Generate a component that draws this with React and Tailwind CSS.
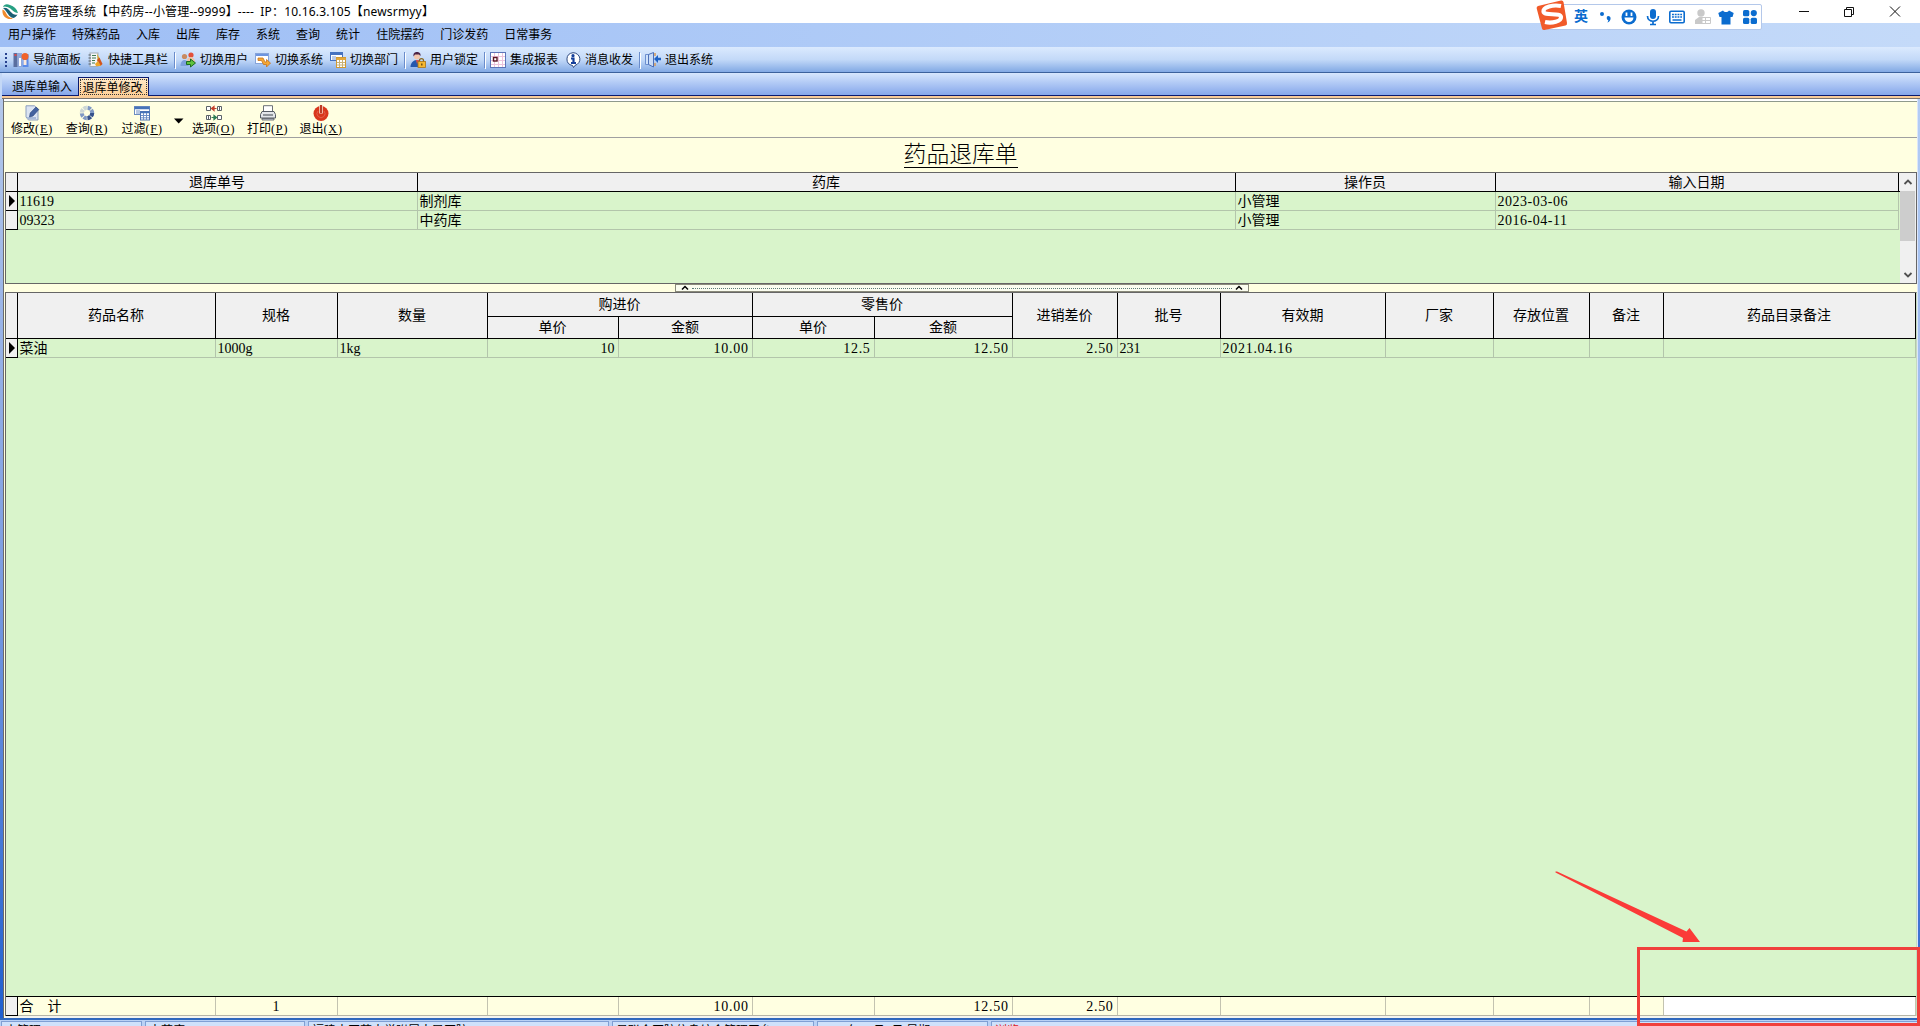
import { clsx } from "clsx";

const MENUS = ["用户操作", "特殊药品", "入库", "出库", "库存", "系统", "查询", "统计", "住院摆药", "门诊发药", "日常事务"];

const TOOLS = [
  [{ label: "导航面板", icon: PanelIcon }, { label: "快捷工具栏", icon: ShortcutIcon, wide: true }],
  [{ label: "切换用户", icon: UsersIcon }, { label: "切换系统", icon: SwitchIcon }, { label: "切换部门", icon: TablesIcon }],
  [{ label: "用户锁定", icon: LockIcon }],
  [{ label: "集成报表", icon: ReportIcon }, { label: "消息收发", icon: InfoIcon }],
  [{ label: "退出系统", icon: DoorIcon }],
];

const ORDERS = [
  { no: "11619", store: "制剂库", user: "小管理", date: "2023-03-06", current: true },
  { no: "09323", store: "中药库", user: "小管理", date: "2016-04-11" },
];

// column widths of the detail grid, the 1px separator included
const W = {
  name: "w-[198px]", spec: "w-[122px]", qty: "w-[150px]",
  buyPrice: "w-[131px]", buySum: "w-[134px]", sellPrice: "w-[122px]", sellSum: "w-[138px]",
  diff: "w-[105px]", batch: "w-[103px]", expiry: "w-[165px]", maker: "w-[108px]",
  place: "w-[96px]", note: "w-[74px]", catalog: "w-[252px]",
};

const DETAIL = [
  { w: W.name, text: "菜油" },
  { w: W.spec, text: "1000g" },
  { w: W.qty, text: "1kg" },
  { w: W.buyPrice, text: "10", right: true },
  { w: W.buySum, text: "10.00", right: true },
  { w: W.sellPrice, text: "12.5", right: true },
  { w: W.sellSum, text: "12.50", right: true },
  { w: W.diff, text: "2.50", right: true },
  { w: W.batch, text: "231" },
  { w: W.expiry, text: "2021.04.16" },
  { w: W.maker }, { w: W.place }, { w: W.note }, { w: W.catalog },
];

const TOTALS = [
  { w: W.name, text: "合　计" },
  { w: W.spec, text: "1", center: true },
  { w: W.qty },
  { w: W.buyPrice },
  { w: W.buySum, text: "10.00", right: true },
  { w: W.sellPrice },
  { w: W.sellSum, text: "12.50", right: true },
  { w: W.diff, text: "2.50", right: true },
  { w: W.batch }, { w: W.expiry }, { w: W.maker }, { w: W.place }, { w: W.note },
  { w: W.catalog, white: true },
];

const STATUS = [
  { w: "w-[141px]", text: "小管理" },
  { w: "w-[160px]", text: "中药库" },
  { w: "w-[301px]", text: "福建中医药大学附属人民医院" },
  { w: "w-[202px]", text: "易联众医院信息综合管理平台" },
  { w: "w-[171px]", text: "2023年03月7日 星期二" },
  { w: "flex-1", text: "浏览", red: true },
];

function Svg({ children, size = "size-4" }) {
  return <svg viewBox="0 0 16 16" className={clsx("shrink-0", size)}>{children}</svg>;
}

function PanelIcon() {
  return (
    <Svg>
      <rect x="0.5" y="1" width="4" height="14" fill="#5a6fa0" />
      <rect x="1.5" y="2" width="2" height="2" fill="#e04848" />
      <rect x="5" y="1" width="4" height="14" fill="#8fa6d8" />
      <rect x="6" y="6" width="2" height="8" fill="#fff" />
      <rect x="9.5" y="2" width="6" height="13" fill="#5b8be8" />
      <circle cx="12" cy="4.5" r="3.5" fill="#f0622a" />
      <rect x="10.5" y="8" width="3" height="5" fill="#fbe9dc" />
    </Svg>
  );
}
function ShortcutIcon() {
  return (
    <Svg>
      <rect x="2" y="1" width="8" height="13.5" fill="#f4f6f8" stroke="#a3adb5" />
      <path d="M4 3.5h4M4 6h4M4 8.500h3M4 11h3" stroke="#3f7a50" />
      <path d="M0.500 3h2.500M0.500 6h2.500M0.500 9h2.500M0.500 12h2.500" stroke="#56606a" />
      <path d="M9 1.500l2.500 5-1.500 3.500z" fill="#d9a520" />
      <path d="M9 8l2.500-2.500L14.500 12l-2 2z" fill="#d2541c" />
      <path d="M7 12l3-3 3 5H8z" fill="#eda52a" />
    </Svg>
  );
}
function UsersIcon() {
  return (
    <Svg>
      <circle cx="4.500" cy="4.500" r="2.600" fill="#c98a60" />
      <circle cx="11" cy="3" r="2.600" fill="#e2503a" />
      <path d="M0.500 14c0-4 2-6 4-6s4 2 4 6z" fill="#7ea0dd" />
      <path d="M7 9c0-3 2-4 4-4s4 2 4 5z" fill="#f2c3a4" />
      <path d="M6.500 9.500h4V7l5 4-5 4v-2.500h-4z" fill="#5fc33c" stroke="#1d6b21" />
    </Svg>
  );
}
function SwitchIcon() {
  return (
    <Svg>
      <rect x="0.500" y="1.500" width="13" height="10" fill="#fff" stroke="#86a4da" />
      <rect x="1" y="2" width="12" height="2" fill="#6d95e0" />
      <path d="M3 6h5l2 4h1.500V7.500L15.500 11l-4 4v-2.500H8.500L6.500 8.500H3z" fill="#f5a835" stroke="#c8741b" strokeWidth="0.800" />
    </Svg>
  );
}
function TablesIcon() {
  return (
    <Svg>
      <rect x="0.500" y="0.500" width="12" height="8" fill="#fff" stroke="#4673c0" />
      <path d="M0.500 2h12" stroke="#4673c0" strokeWidth="2" />
      <path d="M2 5h4M2 7h4" stroke="#7a9ad0" />
      <rect x="6.500" y="5.500" width="9" height="10" fill="#fff" stroke="#d19a33" />
      <path d="M6.500 7h9" stroke="#e5a93c" strokeWidth="2" />
      <path d="M9.500 8v7M12.500 8v7M7 10.500h8M7 13h8" stroke="#c9b277" />
    </Svg>
  );
}
function LockIcon() {
  return (
    <Svg>
      <circle cx="7" cy="4.500" r="3" fill="#f3c7ad" />
      <path d="M3.500 4.500C3 1 5 0 7 0s4 1 3.500 4L9 2.500H5z" fill="#4b2345" />
      <path d="M0.500 15c0-4 3-7 6-7s5 2 6 7z" fill="#2558ae" />
      <path d="M6 8l1 4 2-4z" fill="#e05050" />
      <path d="M9.500 10V8.500c0-2.600 4-2.600 4 0V10" fill="none" stroke="#8a6a20" strokeWidth="1.300" />
      <rect x="8" y="9.500" width="7.500" height="6" fill="#f6b832" stroke="#a8741a" strokeWidth="0.800" />
      <path d="M11.800 11.500v2" stroke="#5f4210" strokeWidth="1.300" />
    </Svg>
  );
}
function ReportIcon() {
  return (
    <Svg>
      <rect x="0.500" y="0.500" width="15" height="15" fill="#fff" stroke="#5b74b8" />
      <path d="M4.500 1v14M8.500 1v14M12.500 1v14M1 4.500h14M1 8.500h14M1 12.500h14" stroke="#ecc4dc" />
      <rect x="3.500" y="5.500" width="3.500" height="3.500" fill="#fff" stroke="#5c1624" strokeWidth="1.400" />
    </Svg>
  );
}
function InfoIcon() {
  return (
    <Svg>
      <path d="M8 0.700a7 6.500 0 0 1 2 12.700L8.500 15.500 7.500 13.500A7 6.500 0 0 1 8 0.700z" fill="#fff" stroke="#2f4a80" />
      <circle cx="8" cy="3.700" r="1.600" fill="#16409a" />
      <path d="M6 6.500h2.500V11M6 11h5" fill="none" stroke="#16409a" strokeWidth="2.200" />
    </Svg>
  );
}
function DoorIcon() {
  return (
    <Svg>
      <path d="M0.500 2.500h8v10h-8z" fill="#cfe2fb" stroke="#6c8fd0" />
      <path d="M3.500 2.500L8.500 0.500v14.500l-5-2.500z" fill="#c9dcf8" stroke="#4d70b8" />
      <path d="M10 1v3M10 11v3" stroke="#d89a58" strokeWidth="1.500" />
      <path d="M9 7l4-4v2.700h3v2.600h-3V11z" fill="#1f62c4" />
    </Svg>
  );
}

function EditIcon() {
  return (
    <Svg>
      <path d="M2 0.800h8.500l3.500 3.200v11H4.500L2 12z" fill="#dbe4f2" stroke="#8c9fbe" />
      <path d="M3 13h9" stroke="#a8bad8" strokeWidth="2" />
      <path d="M5.500 12l0.700-4L12 2l2.800 2.500-5.800 6.500z" fill="#44639f" stroke="#27417a" strokeWidth="0.600" />
    </Svg>
  );
}
function QueryIcon() {
  return (
    <Svg>
      <circle cx="8" cy="8" r="5.200" fill="none" stroke="#7f98c4" strokeWidth="4" strokeDasharray="3.300 0.780" />
      <path d="M8 2.800A5.200 5.200 0 0 0 2.800 8" fill="none" stroke="#ffffe1" strokeWidth="4.200" opacity="0.600" />
      <path d="M13.200 8A5.200 5.200 0 0 1 8 13.200" fill="none" stroke="#35518b" strokeWidth="4" strokeDasharray="3.300 0.780" />
    </Svg>
  );
}
function FilterIcon() {
  return (
    <Svg>
      <rect x="0.500" y="1.500" width="15" height="8" fill="#fff" stroke="#6c8cc0" />
      <path d="M0.500 3h15" stroke="#4673b8" strokeWidth="2.500" />
      <path d="M2 6h4M2 8h4" stroke="#6f8fc6" />
      <rect x="6.500" y="6.500" width="9" height="8.500" fill="#fff" stroke="#4f74b4" />
      <path d="M6.500 7.500h9" stroke="#4673b8" strokeWidth="1.500" />
      <path d="M9.500 8v7M12.500 8v7M7 10.500h8M7 12.800h8" stroke="#6f8fc6" />
    </Svg>
  );
}
function OptionsIcon() {
  return (
    <Svg>
      <path d="M0.500 1.500h4v4h-4zM11.500 1.500h4v4h-4zM0.500 10.500h4v4h-4zM11.500 10.500h4v4h-4z" fill="#fff" stroke="#5b6268" />
      <path d="M13.500 1.500v4M2.500 10.500v4" stroke="#5b6268" />
      <path d="M5.500 3.500l2.500-2v4zM7 3.500h3.500" fill="#c3402c" stroke="#c3402c" strokeWidth="1.200" />
      <path d="M10.500 12.500l-2.500-2v4zM5.500 12.500h3" fill="#2d7f58" stroke="#2d7f58" strokeWidth="1.200" />
    </Svg>
  );
}
function PrintIcon() {
  return (
    <Svg>
      <path d="M3.500 7V0.700h9V7" fill="#fff" stroke="#6b7078" />
      <path d="M2 6.500h12l1.500 3v3.500h-15V9.500z" fill="#e3e6ea" stroke="#555b64" />
      <path d="M3 10h10" stroke="#3f444c" />
      <path d="M2 13.500h12v1.500H2z" fill="#c9ced6" stroke="#555b64" strokeWidth="0.800" />
    </Svg>
  );
}
function PowerIcon() {
  return (
    <Svg>
      <circle cx="8" cy="8.500" r="7.500" fill="#d9371c" />
      <path d="M5 6a4 4 0 1 0 6 0" fill="none" stroke="#e2604a" strokeWidth="1" />
      <path d="M8 0v8.500" stroke="#f6d9c8" strokeWidth="3.600" />
      <path d="M8 0v8" stroke="#b52a12" strokeWidth="1.800" />
    </Svg>
  );
}

function ImeBar() {
  return (
    <div className="absolute left-[1536px] top-0 z-20 flex h-[30px] w-[226px] items-start">
      <div className="mt-1 ml-[10px] flex h-[26px] w-[216px] items-center rounded-[2px] border border-[#b4c8ea] bg-white pl-[27px] text-[#0b6ccf]">
        <span className="w-[24px] text-[14px] leading-[22px] font-bold">英</span>
        <svg viewBox="0 0 16 16" className="ml-[-1px] size-4 shrink-0" fill="currentColor">
          <circle cx="5" cy="5" r="2" />
          <path d="M10 7.500a2.200 2.200 0 0 1 3.600 1.500c0 2.500-1.300 4-3.300 4.600 0.800-1 1-1.600 1-2.300-1.500-0.400-1.900-2.400-1.300-3.800z" />
        </svg>
        <svg viewBox="0 0 16 16" className="ml-[8px] size-4 shrink-0">
          <circle cx="8" cy="8" r="7.500" fill="currentColor" />
          <path d="M5.500 3.500v3.500M10.500 3.500v3.500" stroke="#fff" strokeWidth="1.800" />
          <path d="M3.500 8.500h9a4.500 4.500 0 0 1-9 0z" fill="#fff" />
        </svg>
        <svg viewBox="0 0 16 18" className="ml-[8px] h-[18px] w-4 shrink-0">
          <rect x="5" y="1" width="6" height="10" rx="3" fill="currentColor" />
          <path d="M2.500 8c0 7 11 7 11 0M8 13v3M5 16.500h6" fill="none" stroke="currentColor" strokeWidth="1.700" />
        </svg>
        <svg viewBox="0 0 16 14" className="ml-[8px] h-[14px] w-4 shrink-0">
          <rect x="0.800" y="1.200" width="14.400" height="11.600" rx="1.200" fill="#fff" stroke="currentColor" strokeWidth="1.600" />
          <path d="M3 4.500h10M3 7h10" stroke="currentColor" strokeWidth="1.700" strokeDasharray="1.900 0.850" />
          <path d="M3.500 10h9" stroke="currentColor" strokeWidth="1.500" />
        </svg>
        <svg viewBox="0 0 16 16" className="ml-[10px] size-4 shrink-0">
          <circle cx="6" cy="4" r="3.700" fill="#c9c9c9" />
          <path d="M0 15V11l4-3h4v7z" fill="#c9c9c9" />
          <path d="M7 8.500h8.500v6H7zM7 11.500h8.500M10.500 8.500v6" fill="#fff" stroke="#c9c9c9" />
        </svg>
        <svg viewBox="0 0 16 15" className="ml-[7px] h-[15px] w-4 shrink-0">
          <path d="M5 0.500c1.500 2 4.500 2 6 0l4.700 2.500L14.500 7l-2 0v7.500h-9V7h-2L0.300 3z" fill="currentColor" />
        </svg>
        <svg viewBox="0 0 14 14" className="ml-[9px] size-[14px] shrink-0" fill="currentColor">
          <rect width="6.300" height="6.300" rx="1.600" />
          <circle cx="10.800" cy="3.100" r="3.100" />
          <rect y="7.700" width="6.300" height="6.300" rx="1.600" />
          <rect x="7.700" y="7.700" width="6.300" height="6.300" rx="1.600" />
        </svg>
      </div>
      <svg viewBox="0 0 32 31" className="absolute top-0 left-0 h-[31px] w-8">
        <path d="M2 6L25 0.500q2-0.500 2.500 1.500L31 23q0.300 2-1.500 2.500L8.500 30q-2 0.300-2.500-1.500L0.700 8.500Q0.300 6.500 2 6z" fill="#f15a29" />
        <path d="M25 6C17 4.500 7 7 7.500 11.500c0.500 5 17 0.500 17.500 5.500 0.300 4.500-9 6.500-16 5" fill="none" stroke="#fff" strokeWidth="4.200" />
      </svg>
    </div>
  );
}

function TitleBar() {
  return (
    <div className="flex h-[23px] items-center bg-white pl-[2px]">
      <svg viewBox="0 0 17 17" className="size-[17px] shrink-0">
        <path d="M1 4C2 1 5 0.500 8 2c4 1.500 7 4 8 8-2 0-4-1-6-3S5 3 1 4z" fill="#27a083" />
        <path d="M1 5c3-1 5.500 1 7.500 3.500s4.500 4 7 3c-1 2-2.500 3-4 3.500-3-0.500-4-2-5.500-4S3.500 7 1 5z" fill="#1a5f74" />
        <path d="M0.500 6.500c2 0.500 3 2.500 4 4.500s3 4 6.500 4.500C6 17.500-0.500 14 0.500 6.500z" fill="#f08b2d" />
        <path d="M1 4.500c4-1 5.500 1 7.300 3.200s4 3.500 7.200 2.800" fill="none" stroke="#fff" strokeWidth="0.700" />
      </svg>
      <span className="ml-1 text-[12px] tracking-[0.180px] whitespace-pre text-black [word-spacing:3px]">药房管理系统【中药房--小管理--9999】---- IP：10.16.3.105【newsrmyy】</span>
      <svg viewBox="0 0 110 16" className="mr-[15px] ml-auto h-4 w-[110px]" fill="none" stroke="#111" strokeWidth="1">
        <path d="M4 7.500h10" />
        <path d="M49.500 5.500h7v7h-7zM51.500 5.500v-2h7v7h-2" />
        <path d="M95 2.500l10 10M105 2.500l-10 10" />
      </svg>
    </div>
  );
}

function Cell({ w, text, right, center, white, line = "border-[#b3c5ab]" }) {
  return (
    <div className={clsx("flex h-full shrink-0 items-center border-r px-[2px] pt-[2px] text-[14px]", w, line,
      right && "justify-end pr-[3px]", center && "justify-center", white && "bg-white")}>
      {text && (
        <span className={clsx("leading-[16px] whitespace-pre", /\./.test(text) && "tracking-[0.700px]", /-/.test(text) && "tracking-[0.500px]")}>{text}</span>
      )}
    </div>
  );
}

function Head({ w, children, className }) {
  return (
    <div className={clsx("flex shrink-0 items-center justify-center border-r border-black text-[14px] leading-[18px]", w, className)}>{children}</div>
  );
}

function HeadGroup({ title, left, right }) {
  return (
    <div className="flex flex-col">
      <div className="flex h-[24px] items-center justify-center border-r border-b border-black text-[14px] leading-[18px]">{title}</div>
      <div className="flex flex-1">
        <Head w={left}>单价</Head>
        <Head w={right}>金额</Head>
      </div>
    </div>
  );
}

function Indicator({ current }) {
  return (
    <div className="flex h-full w-[12px] shrink-0 items-center border-r border-black bg-[#f0f0f0] pl-[3px]">
      {current && (
        <svg viewBox="0 0 6 12" className="h-3 w-[6px]"><path d="M0 0l6 6-6 6z" fill="#000" /></svg>
      )}
    </div>
  );
}

function ToolButton({ icon: Icon, label, hotkey, w }) {
  return (
    <div className={clsx("flex flex-col items-center pt-[3px]", w)}>
      <Icon />
      <div className="flex text-[12px] leading-4 whitespace-nowrap">
        {label}
        <span className="font-['Liberation_Serif',serif] tracking-[0.900px]">(<u className="underline-offset-1">{hotkey}</u>)</span>
      </div>
    </div>
  );
}

function OrdersGrid() {
  return (
    <div className="flex h-[112px] border border-[#666] bg-[#d9f4cb]">
      <div className="flex-1">
        <div className="flex h-[19px] border-b border-black bg-[#f0f0f0]">
          <Head w="w-[12px]" />
          <Head w="w-[400px]" className="pt-px">退库单号</Head>
          <Head w="w-[818px]" className="pt-px">药库</Head>
          <Head w="w-[260px]" className="pt-px">操作员</Head>
          <Head w="w-[403px]" className="pt-px">输入日期</Head>
        </div>
        {ORDERS.map((o) => (
          <div key={o.no} className="flex h-[19px]">
            <div className="border-b border-black"><Indicator current={o.current} /></div>
            <div className="flex border-b border-[#b3c5ab]">
              <Cell w="w-[400px]" text={o.no} />
              <Cell w="w-[818px]" text={o.store} />
              <Cell w="w-[260px]" text={o.user} />
              <Cell w="w-[403px]" text={o.date} />
            </div>
          </div>
        ))}
      </div>
      <div className="flex w-[16px] flex-col items-center bg-[#f0f0f0]">
        <svg viewBox="0 0 16 18" className="h-[18px] w-4"><path d="M4.500 11L8 7.500l3.500 3.500" fill="none" stroke="#505050" strokeWidth="1.800" /></svg>
        <div className="h-[50px] w-[15px] bg-[#cdcdcd]" />
        <svg viewBox="0 0 16 18" className="mt-auto h-[18px] w-4"><path d="M4.500 8L8 11.500 11.500 8" fill="none" stroke="#505050" strokeWidth="1.800" /></svg>
      </div>
    </div>
  );
}

function DetailGrid() {
  return (
    <div className="flex flex-1 flex-col border border-b-0 border-[#666] border-r-[#c5dcc0] bg-[#d9f4cb]">
      <div className="flex h-[46px] border-b border-black bg-[#f0f0f0]">
        <Head w="w-[12px]" />
        <Head w={W.name}>药品名称</Head>
        <Head w={W.spec}>规格</Head>
        <Head w={W.qty}>数量</Head>
        <HeadGroup title="购进价" left={W.buyPrice} right={W.buySum} />
        <HeadGroup title="零售价" left={W.sellPrice} right={W.sellSum} />
        <Head w={W.diff}>进销差价</Head>
        <Head w={W.batch}>批号</Head>
        <Head w={W.expiry}>有效期</Head>
        <Head w={W.maker}>厂家</Head>
        <Head w={W.place}>存放位置</Head>
        <Head w={W.note}>备注</Head>
        <Head w={W.catalog}>药品目录备注</Head>
      </div>
      <div className="flex h-[19px]">
        <div className="border-b border-black"><Indicator current /></div>
        <div className="flex border-b border-[#b3c5ab]">
          {DETAIL.map((c, i) => <Cell key={i} {...c} />)}
        </div>
      </div>
      <div className="mt-auto flex h-[20px] border-t border-black bg-[#ffffe1]">
        <div className="border-b border-black"><Indicator /></div>
        <div className="flex border-b border-[#b5b5a8]">
          {TOTALS.map((c, i) => <Cell key={i} {...c} line="border-[#c3c3b0]" />)}
        </div>
      </div>
    </div>
  );
}

const CARET = "M1 4.500L4 1.500l3 3";

export default function App() {
  return (
    <div className="relative flex h-[1026px] w-[1920px] flex-col overflow-hidden bg-[#c4d8f6] font-['Liberation_Serif','Noto_Sans_CJK_SC',serif] text-black">
      <div className="font-['Noto_Sans','Noto_Sans_CJK_SC',sans-serif]">
        <TitleBar />
        <div className="flex h-[24px] bg-gradient-to-r from-[#9ebef5] to-[#c4daf9]">
          {MENUS.map((m) => <div key={m} className="px-2 text-[12px] leading-[23px]">{m}</div>)}
        </div>
        <div className="flex h-[26px] items-center border-b border-[#3b619c] bg-gradient-to-b from-[#dbeafe] via-[#c3d9f8] to-[#82a9e4] pl-[5px]">
          <svg viewBox="0 0 3 16" className="mr-[5px] h-4 w-[3px]"><path d="M1 1v14" stroke="#27418e" strokeWidth="2" strokeDasharray="2 2" /></svg>
          {TOOLS.map((group, g) => (
            <div key={g} className={clsx("flex items-center", g > 0 && "ml-[-1px] before:mr-[5px] before:h-4 before:w-px before:bg-[#6a8ccb] before:shadow-[1px_1px_0_#fff]")}>
              {group.map(({ label, icon: Icon, wide }) => (
                <div key={label} className={clsx("flex items-center", wide ? "w-[87px]" : "w-[75px]")}>
                  <Icon />
                  <span className="ml-1 text-[12px] leading-4 whitespace-nowrap">{label}</span>
                </div>
              ))}
            </div>
          ))}
        </div>
      </div>

      {/* window tabs */}
      <div className="ml-[2px] flex h-[26px] flex-col">
        <div className="flex h-[23px] items-end border-b border-[#0a1a6e] bg-gradient-to-b from-[#d6e6fd] to-[#86a7ea]">
          <div className="w-[76px] pt-[2px] pl-[10px] text-[12px] leading-[16px]">退库单输入</div>
          <div className="mb-[-1px] h-[19px] w-[71px] border border-b-0 border-[#0a1a6e] bg-gradient-to-b from-[#ffe9c8] to-[#ffcf96] p-px">
            <div className="flex h-full justify-center border border-dotted border-[#333] text-[12px] leading-[16px] whitespace-nowrap"><span className="mr-[2px]">退库单修改</span></div>
          </div>
        </div>
        <div className="h-[2px] bg-[#f8cb98]" />
        <div className="h-px bg-[#77736f]" />
      </div>

      <div className="flex h-[921px] border-b-2 border-[#2f68bd]">
        <div className="w-[3px] bg-gradient-to-b from-[#b4c8ea] via-[#7f9fe2] to-[#1f5fcf]" />
        <div className="flex flex-1 flex-col border-l border-[#6b6b6b] bg-[#ffffe1] pl-px">
          <div className="-ml-px flex h-[39px] border-t-2 border-b border-t-white border-b-[#a0a0a0]">
            <div className="flex flex-1 border-t border-[#8f9a8c] pl-px">
              <ToolButton icon={EditIcon} label="修改" hotkey="E" w="w-[55px]" />
              <ToolButton icon={QueryIcon} label="查询" hotkey="R" w="w-[55px]" />
              <ToolButton icon={FilterIcon} label="过滤" hotkey="F" w="w-[55px]" />
              <svg viewBox="0 0 17 10" className="mt-[14px] h-[10px] w-[17px]"><path d="M4 2.500h9.500L8.700 7.500z" /></svg>
              <ToolButton icon={OptionsIcon} label="选项" hotkey="O" w="w-[54px]" />
              <ToolButton icon={PrintIcon} label="打印" hotkey="P" w="w-[54px]" />
              <ToolButton icon={PowerIcon} label="退出" hotkey="X" w="w-[53px]" />
            </div>
          </div>
          <div className="flex h-[34px] items-center justify-center">
            <h1 className="h-[26px] border-b border-black pt-px text-[22.800px] leading-[23px] font-light">药品退库单</h1>
          </div>
          <OrdersGrid />
          <div className="flex h-[8px] justify-center pl-[2px]">
            <div className="flex h-full w-[574px] items-center border border-[#8a8a7a] bg-[#fbfdf0] px-[5px]">
              <svg viewBox="0 0 8 6" className="h-[6px] w-2"><path d={CARET} fill="none" stroke="#000" strokeWidth="1.500" /></svg>
              <div className="mx-[3px] flex-1 border-t border-dotted border-[#5c7c78]" />
              <svg viewBox="0 0 8 6" className="h-[6px] w-2"><path d={CARET} fill="none" stroke="#000" strokeWidth="1.500" /></svg>
            </div>
          </div>
          <DetailGrid />
          <div className="h-[2px] bg-[#f4f4ee]" />
        </div>
        <div className="flex w-[4px] bg-[#dce6fa]">
          <div className="ml-auto w-[2px] bg-gradient-to-b from-[#b4cdf5] via-[#8fb0ec] to-[#2a62cc]" />
        </div>
      </div>

      {/* status bar, cut off by the lower screen edge */}
      <div className="flex h-[6px] items-start gap-[3px] overflow-hidden bg-[#b9d1f5] pt-px pl-px font-['Noto_Sans_CJK_SC',sans-serif]">
        {STATUS.map((s) => (
          <div key={s.text} className={clsx("h-[20px] border border-[#7f9fd4] bg-[#cfe1fb] px-[3px] text-[12px] leading-[16px] whitespace-pre", s.w, s.red && "text-[#e02020]")}>{s.text}</div>
        ))}
      </div>

      <ImeBar />

      {/* red annotation */}
      <svg viewBox="0 0 146 72" className="absolute top-[871px] left-[1555px] h-[72px] w-[146px]">
        <path d="M0.500 0.500L0.500 1.500L128 67L127.500 71H145L134.500 57L131.500 60.500L2 0.500z" fill="#fb3b38" />
      </svg>
      <div className="absolute top-[947px] left-[1637px] h-[79px] w-[283px] border-[3px] border-[#f0403c]" />
    </div>
  );
}
